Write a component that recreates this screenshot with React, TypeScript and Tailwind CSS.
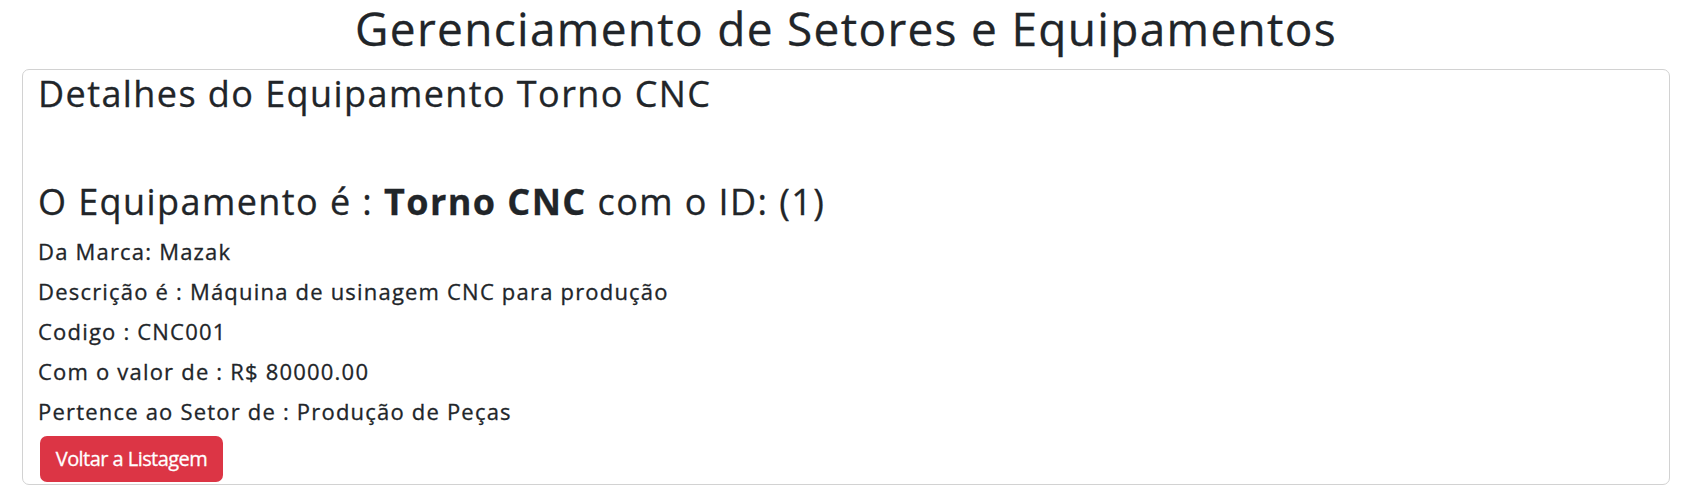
import React from "react";

export default function App() {
  const font = { fontFamily: '"Open Sans", "Noto Sans", sans-serif' };
  return (
    <div
      className="bg-white text-[#212529] w-[1686px] h-[502px] overflow-hidden [-webkit-text-stroke:0.3px]"
      style={font}
    >
      <h1 className="text-[46px] leading-[57px] font-normal tracking-[1.3px] text-center mb-[12px] pl-[6px]">
        Gerenciamento de Setores e Equipamentos
      </h1>
      <div className="ml-[22px] mr-[16px] border border-[#d2d2d2] rounded-[7px] px-[15px] pt-[3px] pb-[2px]">
        <h3 className="text-[36px] leading-[42px] font-normal tracking-[1.42px]">
          Detalhes do Equipamento Torno CNC
        </h3>
        <h3 className="text-[36px] leading-[42px] font-normal tracking-[1.42px] mt-[66px]">
          O Equipamento é : <strong className="font-bold">Torno CNC</strong> com o ID: (1)
        </h3>
        <div className="mt-[13px] text-[22px] leading-[30px] font-normal tracking-[1.2px]">
          <p className="mb-[10px]">Da Marca: Mazak</p>
          <p className="mb-[10px]">Descrição é : Máquina de usinagem CNC para produção</p>
          <p className="mb-[10px]">Codigo : CNC001</p>
          <p className="mb-[10px]">Com o valor de : R$ 80000.00</p>
          <p className="mb-[10px]">Pertence ao Setor de : Produção de Peças</p>
        </div>
        <button className="ml-[2px] mt-[2px] w-[183px] h-[46px] rounded-[7px] bg-[#dc3545] text-white text-[20px] leading-[30px] font-normal tracking-[-0.55px] flex items-center justify-center">
          Voltar a Listagem
        </button>
      </div>
    </div>
  );
}
